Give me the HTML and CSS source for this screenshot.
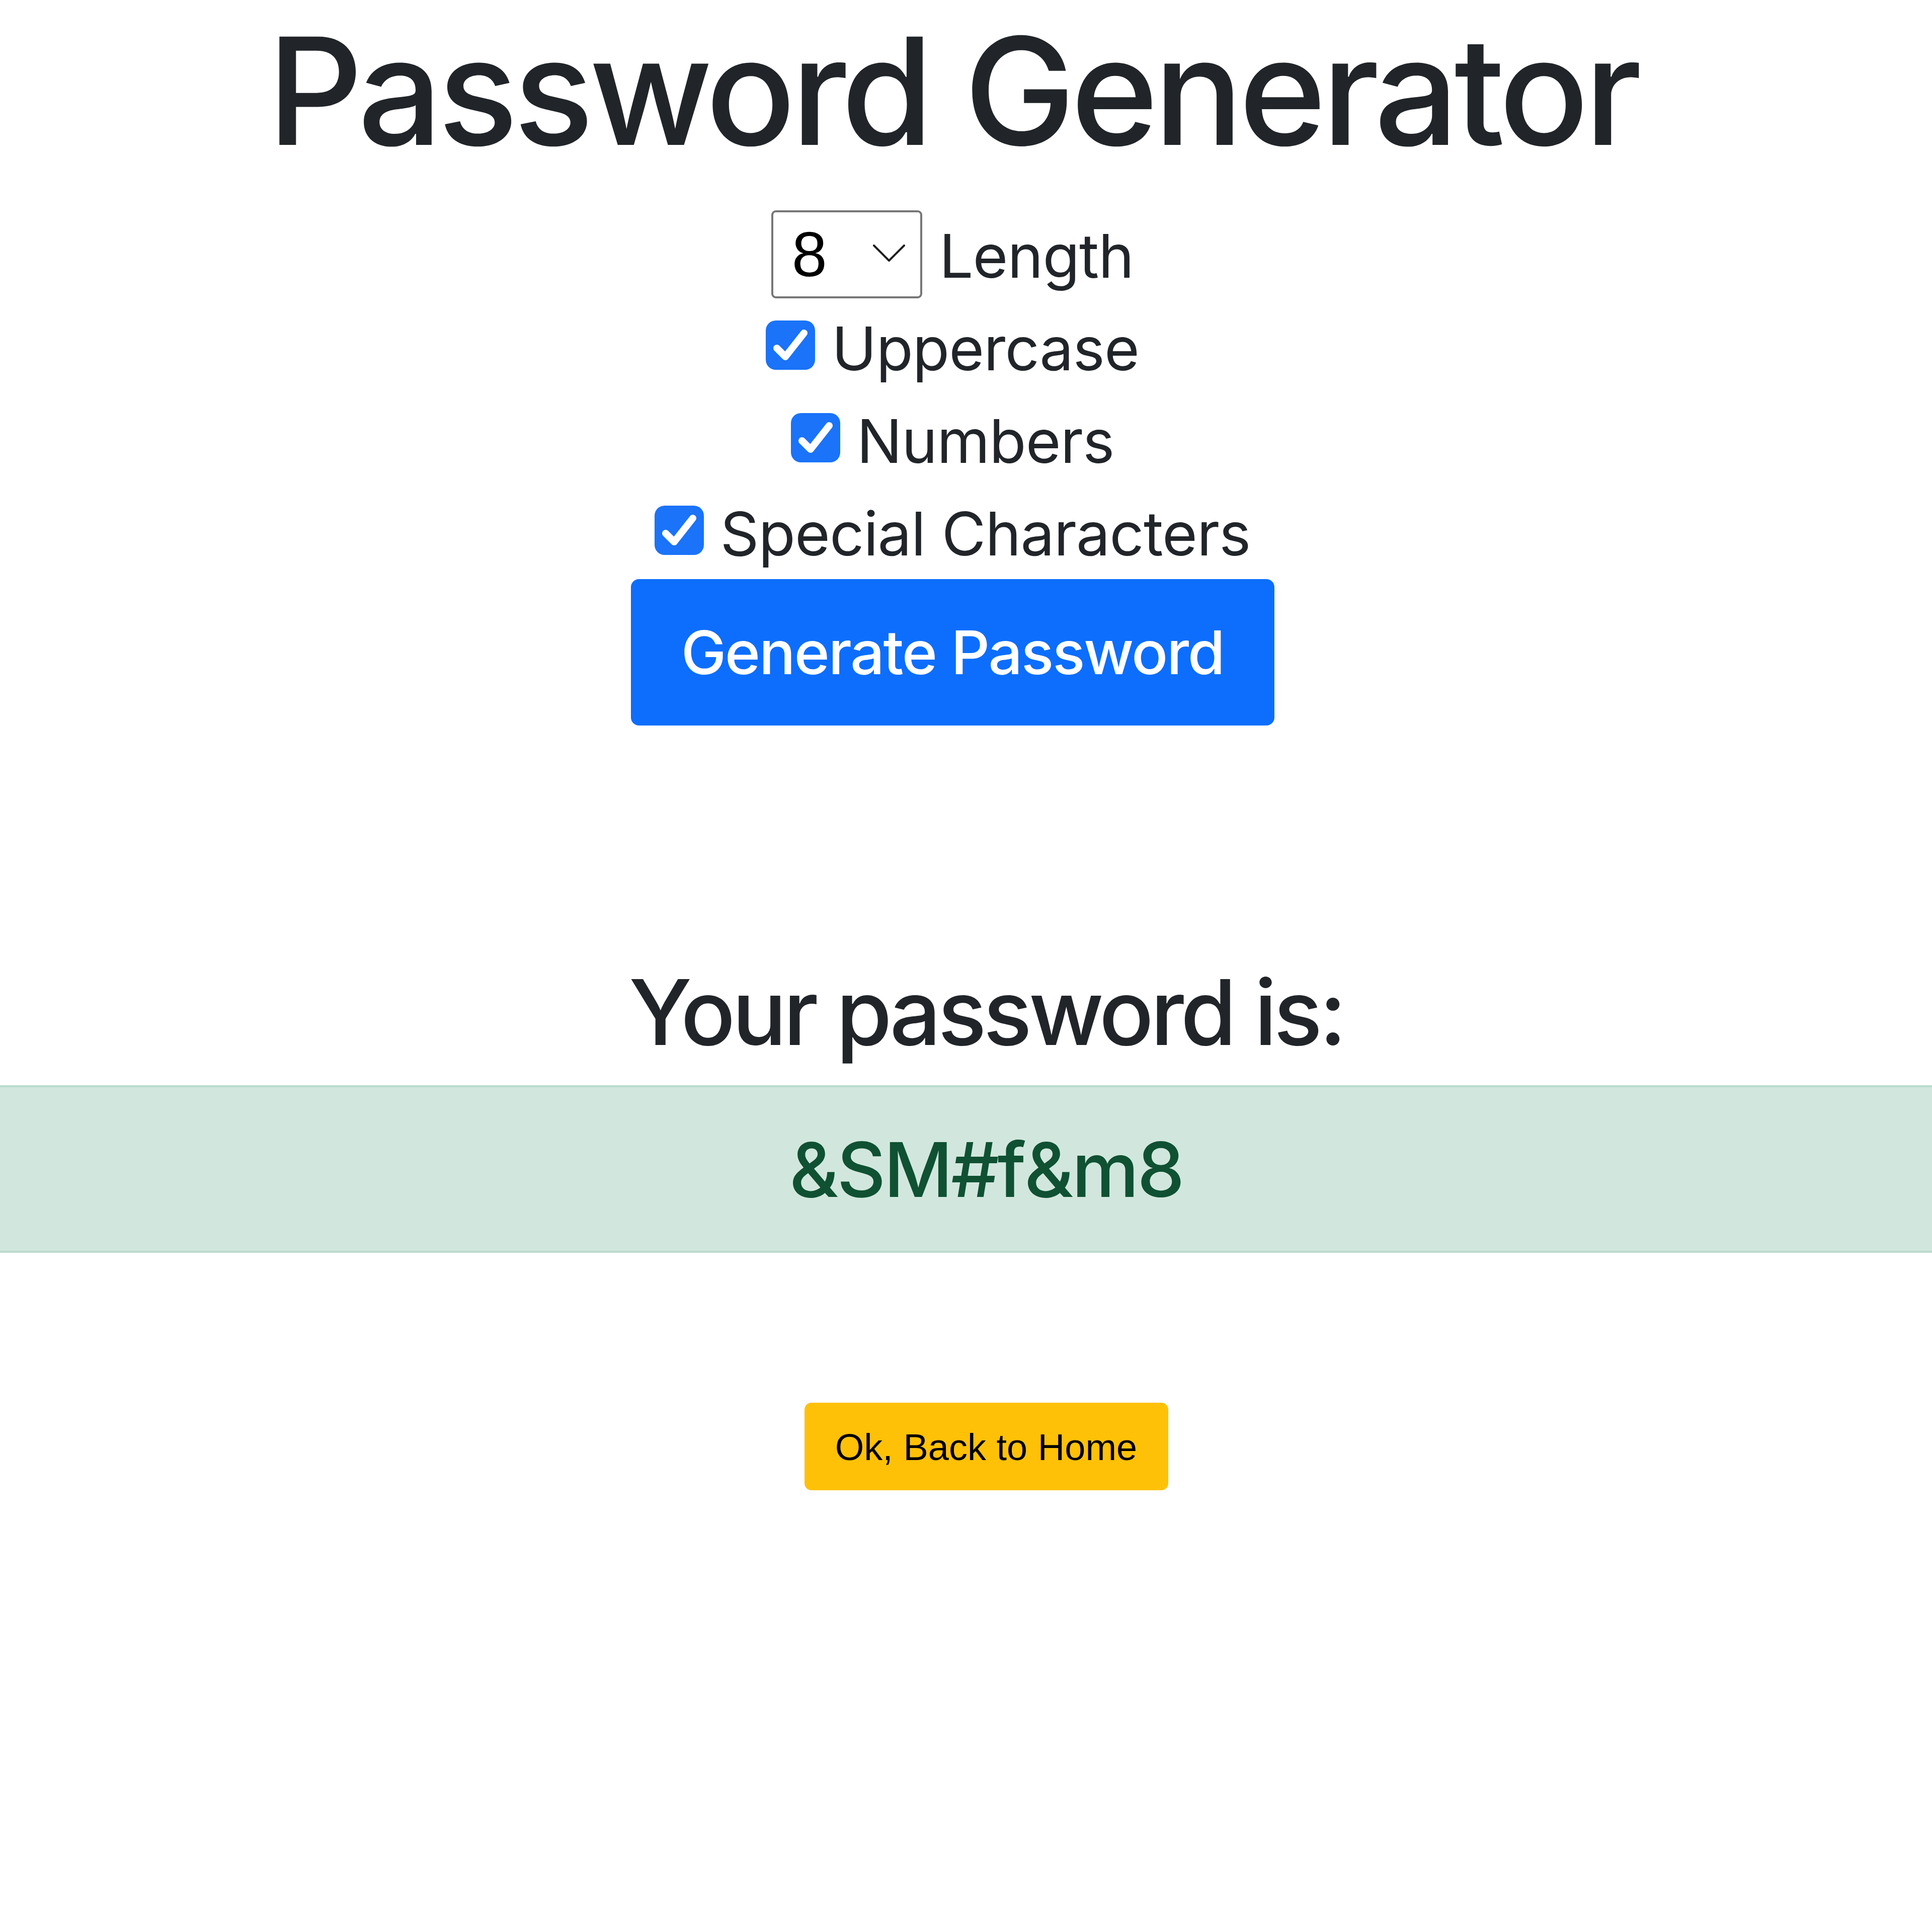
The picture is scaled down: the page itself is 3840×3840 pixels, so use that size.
FILE: index.html
```html
<!DOCTYPE html>
<html lang="en">
<head>
<meta charset="utf-8">
<title>Password Generator</title>
<link rel="stylesheet" href="styles.css">
</head>
<body>
<main class="page">
  <section class="generator">
    <h1 class="title">Password Generator</h1>
    <div class="length-row">
      <div class="select-box">
        <select class="length-select" aria-label="Length">
          <option selected>8</option>
        </select>
        <svg class="chevron" viewBox="0 0 64 35" aria-hidden="true"><path d="M2 2 L32 32 L62 2" fill="none" stroke="#1d1d1f" stroke-width="4" stroke-linecap="round" stroke-linejoin="round"/></svg>
      </div>
      <span class="option-text">Length</span>
    </div>
    <label class="option-row">
      <input type="checkbox" class="native-check" checked>
      <svg class="check" viewBox="0 0 98 98" aria-hidden="true"><rect x="0" y="0" width="98" height="98" rx="20" fill="#1a73f8"/><path d="M22 55 L39 72 L76 25" fill="none" stroke="#fff" stroke-width="14" stroke-linecap="round" stroke-linejoin="round"/></svg>
      <span class="option-text">Uppercase</span>
    </label>
    <label class="option-row">
      <input type="checkbox" class="native-check" checked>
      <svg class="check" viewBox="0 0 98 98" aria-hidden="true"><rect x="0" y="0" width="98" height="98" rx="20" fill="#1a73f8"/><path d="M22 55 L39 72 L76 25" fill="none" stroke="#fff" stroke-width="14" stroke-linecap="round" stroke-linejoin="round"/></svg>
      <span class="option-text">Numbers</span>
    </label>
    <label class="option-row">
      <input type="checkbox" class="native-check" checked>
      <svg class="check" viewBox="0 0 98 98" aria-hidden="true"><rect x="0" y="0" width="98" height="98" rx="20" fill="#1a73f8"/><path d="M22 55 L39 72 L76 25" fill="none" stroke="#fff" stroke-width="14" stroke-linecap="round" stroke-linejoin="round"/></svg>
      <span class="option-text">Special Characters</span>
    </label>
    <button class="btn-generate" type="button">Generate Password</button>
  </section>

  <section class="result">
    <h4 class="result-title">Your password is:</h4>
    <div class="alert-success">
      <h5 class="password">&amp;SM#f&amp;m8</h5>
    </div>
    <button class="btn-home" type="button">Ok, Back to Home</button>
  </section>
</main>
</body>
</html>
```

FILE: styles.css
```css
html, body {
  margin: 0;
  padding: 0;
  background: #ffffff;
}

body {
  font-family: Inter, "Liberation Sans", Arial, sans-serif;
  color: #212529;
}

.page {
  display: flex;
  flex-direction: column;
}

/* ---------- top section ---------- */
.generator {
  display: flex;
  flex-direction: column;
  align-items: center;
  padding-right: 54px;
}

.title {
  margin: 0;
  font-size: 296px;
  font-weight: 500;
  line-height: 360px;
  letter-spacing: -9px;
  color: #212529;
}

.length-row {
  display: flex;
  align-items: center;
  height: 175px;
  margin-top: 58px;
  gap: 34px;
}

.length-row .option-text {
  padding-top: 6px;
}

.select-box {
  box-sizing: border-box;
  width: 300px;
  height: 175px;
  border: 4px solid #777777;
  border-radius: 9px;
  display: flex;
  align-items: center;
  background: #fff;
}

.length-select {
  flex: 1;
  min-width: 0;
  appearance: none;
  -webkit-appearance: none;
  border: none;
  background: transparent;
  outline: none;
  font-family: "Liberation Sans", Arial, sans-serif;
  font-size: 126px;
  color: #000;
  padding: 0 0 0 37px;
  margin: 0;
  height: 160px;
  line-height: 160px;
}

.chevron {
  width: 64px;
  height: 35px;
  margin-right: 30px;
  margin-bottom: 4px;
  flex: none;
}

.option-row {
  display: flex;
  align-items: flex-start;
  height: 180px;
  margin-bottom: 4px;
}

.length-row + .option-row {
  margin-top: 10px;
}

.native-check {
  position: absolute;
  opacity: 0;
  width: 0;
  height: 0;
  margin: 0;
}

.check {
  width: 98px;
  height: 98px;
  margin-top: 34px;
  margin-right: 33px;
  flex: none;
}

.option-text {
  font-size: 120px;
  line-height: 180px;
  font-weight: 400;
  color: #212529;
  white-space: nowrap;
  letter-spacing: -1px;
}

.option-row:last-of-type {
  margin-bottom: 0;
}

.btn-generate {
  box-sizing: border-box;
  width: 1279px;
  height: 291px;
  border: none;
  border-radius: 16px;
  background: #0d6efd;
  color: #ffffff;
  font-family: Inter, "Liberation Sans", Arial, sans-serif;
  font-size: 120px;
  font-weight: 500;
  line-height: 291px;
  padding: 0;
  letter-spacing: -2.5px;
}

/* ---------- result section ---------- */
.result {
  display: flex;
  flex-direction: column;
  align-items: center;
}

.result-title {
  margin: 462px 0 0 80px;
  font-size: 180px;
  font-weight: 500;
  line-height: 216px;
  letter-spacing: -6.5px;
  color: #212529;
}

.alert-success {
  align-self: stretch;
  margin-top: 37px;
  background: #d1e7dd;
  border-top: 4px solid #badbcc;
  border-bottom: 4px solid #badbcc;
  padding: 74px 0 71px 80px;
  display: flex;
  justify-content: center;
}

.password {
  margin: 0;
  font-size: 150px;
  font-weight: 500;
  line-height: 180px;
  color: #0f5132;
  letter-spacing: -3.5px;
}

.btn-home {
  margin: 298px 0 0 80px;
  box-sizing: border-box;
  width: 723px;
  height: 174px;
  border: none;
  border-radius: 14px;
  background: #ffc107;
  color: #000;
  font-family: "Liberation Sans", Arial, sans-serif;
  font-size: 74px;
  font-weight: 400;
  line-height: 170px;
  padding: 4px 0 0 0;
}
```
